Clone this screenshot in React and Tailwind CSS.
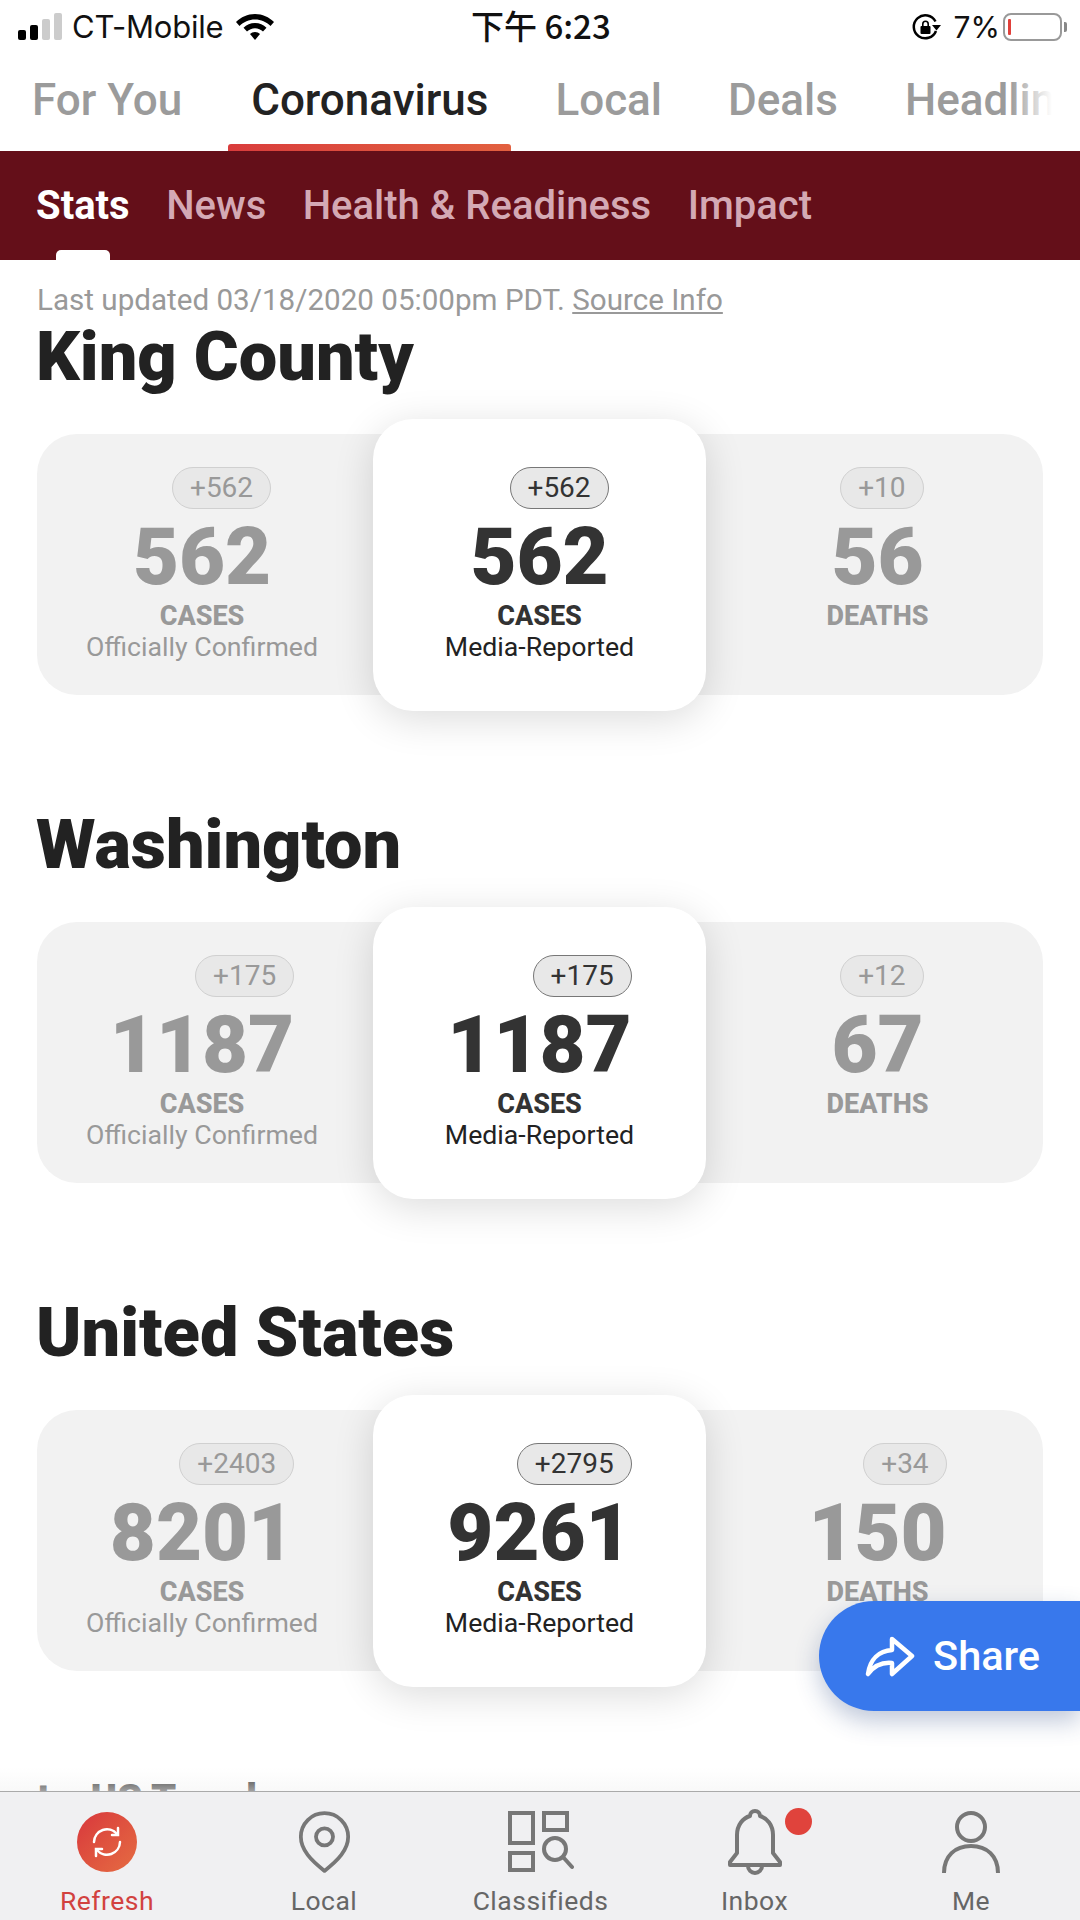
import React from 'react';

const sections = [
  {
    title: 'King County',
    confirmed: { delta: '+562', value: '562' },
    reported: { delta: '+562', value: '562' },
    deaths: { delta: '+10', value: '56' },
  },
  {
    title: 'Washington',
    confirmed: { delta: '+175', value: '1187' },
    reported: { delta: '+175', value: '1187' },
    deaths: { delta: '+12', value: '67' },
  },
  {
    title: 'United States',
    confirmed: { delta: '+2403', value: '8201' },
    reported: { delta: '+2795', value: '9261' },
    deaths: { delta: '+34', value: '150' },
  },
];

const Stat = ({ stat, label, sub, active }) => (
  <div className={`flex flex-col items-center ${active ? 'text-[#333]' : 'text-[#999]'}`}>
    <div className="inline-flex flex-col items-end">
      <span
        className={`h-[42px] px-[17px] flex items-center rounded-full border text-[28px] bg-[#e8e8e8] ${
          active ? 'border-[#777]' : 'border-[#d0d0d0]'
        }`}
      >
        {stat.delta}
      </span>
      <span className="h-[90px] leading-[96px] text-[79.500px] font-black">{stat.value}</span>
    </div>
    <span className="mt-[2px] leading-[30px] text-[27px] font-extrabold">{label}</span>
    {sub && <span className={`leading-[32px] text-[26.700px] ${active ? 'text-[#222]' : ''}`}>{sub}</span>}
  </div>
);

const Section = ({ data }) => (
  <section className="mb-[109px]">
    <h2 className="h-[84px] leading-[82px] -ml-[1px] text-[68.500px] font-black text-[#222]">{data.title}</h2>
    <div className="mt-[34px] h-[261px] flex rounded-[40px] bg-[#f2f2f2]">
      <div className="w-[330px] pt-[33px]">
        <Stat stat={data.confirmed} label="CASES" sub="Officially Confirmed" />
      </div>
      <div className="z-10 ml-[6px] w-[333px] h-[292px] -mt-[15px] pt-[48px] rounded-[40px] bg-white shadow-[0_8px_40px_rgba(0,0,0,0.14)]">
        <Stat stat={data.reported} label="CASES" sub="Media-Reported" active />
      </div>
      <div className="ml-[6px] w-[331px] pt-[33px]">
        <Stat stat={data.deaths} label="DEATHS" />
      </div>
    </div>
  </section>
);

const Wifi = () => (
  <svg width="40" height="30" viewBox="0 0 40 30" fill="#000">
    <path d="M20 2C12.500 2 6 5 1 10l3.500 4C8.500 10 14 7.500 20 7.500S31.500 10 35.500 14L39 10C34 5 27.500 2 20 2z" />
    <path d="M20 11c-4.500 0-8.500 1.800-11.500 4.800l3.500 3.700c2-2 5-3.300 8-3.300s6 1.300 8 3.300l3.500-3.700C28.500 12.800 24.500 11 20 11z" />
    <path d="M20 20c-2 0-3.700.8-5 2l5 6 5-6c-1.300-1.200-3-2-5-2z" />
  </svg>
);

const RotationLock = () => (
  <svg width="30" height="28" viewBox="0 0 30 28" fill="none">
    <path d="M24 18a11.500 11.500 0 1 1-.5-9.500" stroke="#000" strokeWidth="2.500" />
    <path d="M20 12h9l-4.500 5.500z" fill="#000" />
    <rect x="8.500" y="13" width="10" height="8" rx="1" fill="#000" />
    <path d="M10.800 13v-2a2.700 2.700 0 0 1 5.400 0v2" stroke="#000" strokeWidth="1.600" />
  </svg>
);

const StatusBar = () => (
  <div className="h-[54px] pl-[18px] pr-[13px] flex items-center relative font-['Inter',sans-serif] text-[#111]">
    <div className="flex items-end gap-[4px] h-[28px] mb-[2px]">
      <span className="w-[8px] h-[10px] rounded-[2px] bg-black" />
      <span className="w-[8px] h-[15px] rounded-[2px] bg-black" />
      <span className="w-[8px] h-[21px] rounded-[2px] bg-[#ccc]" />
      <span className="w-[8px] h-[27px] rounded-[2px] bg-[#ccc]" />
    </div>
    <span className="ml-[10px] text-[31px] tracking-[-0.2px]">CT-Mobile</span>
    <span className="ml-[11px]"><Wifi /></span>
    <span className="absolute left-[471px] top-[1px] text-[33px] font-medium font-['Noto_Sans_CJK_TC','Inter',sans-serif]">下午 6:23</span>
    <div className="ml-auto flex items-center">
      <RotationLock />
      <span className="ml-[12px] text-[30px]">7%</span>
      <div className="ml-[3px] w-[59px] h-[28px] rounded-[8px] border-[2px] border-[#999] flex items-center pl-[3px]">
        <span className="w-[3px] h-[16px] rounded-[1px] bg-[#e0403a]" />
      </div>
      <span className="ml-[2px] w-[3px] h-[10px] rounded-r-[2px] bg-[#888]" />
    </div>
  </div>
);

const TopTabs = () => (
  <div className="relative h-[97px] overflow-hidden flex pl-[32px] text-[44px] leading-[92px] font-medium whitespace-nowrap text-[#9b9b9b]">
    <span>For You</span>
    <span className="relative ml-[46px] px-[23px] text-[#222]">
      Coronavirus
      <span className="absolute left-0 right-0 bottom-0 h-[7px] rounded-t-[3px] bg-gradient-to-r from-[#d93c3c] to-[#e2603f]" />
    </span>
    <span className="ml-[44px]">Local</span>
    <span className="ml-[66px]">Deals</span>
    <span className="ml-[67px]">Headlines</span>
    <div className="absolute right-0 top-0 bottom-0 w-[70px] bg-gradient-to-r from-transparent to-white to-60%" />
  </div>
);

const subTabs = ['News', 'Health & Readiness', 'Impact'];

const SubTabs = () => (
  <div className="h-[109px] flex gap-[36.500px] pl-[36px] bg-[#640f19] text-[40px] leading-[110px] font-medium text-[#d4a9b4]">
    <span className="relative font-bold text-white">
      Stats
      <span className="absolute left-[20px] right-[20px] bottom-0 h-[10px] rounded-t-[5px] bg-white" />
    </span>
    {subTabs.map((t) => <span key={t}>{t}</span>)}
  </div>
);

const RefreshIcon = () => (
  <div className="w-[60px] h-[60px] rounded-full bg-gradient-to-br from-[#d8363c] to-[#e56b42] flex items-center justify-center">
    <svg width="34" height="34" viewBox="0 0 34 34" fill="none" stroke="#fff" strokeWidth="2.500" strokeLinecap="round">
      <path d="M4 17a13 13 0 0 1 23-8" />
      <path d="M30 17a13 13 0 0 1-23 8" />
      <path d="M28 3v7h-6" />
      <path d="M6 31v-7h6" />
    </svg>
  </div>
);

const PinIcon = () => (
  <svg width="53" height="63" viewBox="0 0 56 66" fill="none" stroke="#777" strokeWidth="4">
    <path d="M28 63C14 52 3 41 3 27a25 25 0 0 1 50 0c0 14-11 25-25 36z" strokeLinejoin="round" />
    <circle cx="28" cy="27" r="9" />
  </svg>
);

const ClassifiedsIcon = () => (
  <svg width="66" height="62" viewBox="0 0 66 62" fill="none" stroke="#777" strokeWidth="4">
    <rect x="2" y="2" width="23" height="30" />
    <rect x="2" y="42" width="23" height="17" />
    <rect x="36" y="2" width="23" height="17" />
    <circle cx="47" cy="38" r="11" />
    <path d="M55 46l9 10" strokeLinecap="round" />
  </svg>
);

const BellIcon = () => (
  <svg width="56" height="66" viewBox="0 0 56 66" fill="none" stroke="#777" strokeWidth="4" strokeLinejoin="round">
    <path d="M3 56h50v-3l-7-9V26C46 16 40 9 33 7c0-3-2-5-5-5s-5 2-5 5C16 9 10 16 10 26v18l-7 9z" />
    <path d="M21 57a7 7 0 0 0 14 0" />
  </svg>
);

const PersonIcon = () => (
  <svg width="58" height="64" viewBox="0 0 58 64" fill="none" stroke="#777" strokeWidth="4">
    <circle cx="29" cy="17" r="14" />
    <path d="M2 63C2 46 13 36 29 36s27 10 27 27" />
  </svg>
);

const navItems = [
  { label: 'Refresh', icon: RefreshIcon, width: 'w-[214px]', color: 'text-[#d2423f]' },
  { label: 'Local', icon: PinIcon, width: 'w-[220px]', color: 'text-[#666]' },
  { label: 'Classifieds', icon: ClassifiedsIcon, width: 'w-[213px]', color: 'text-[#666]' },
  { label: 'Inbox', icon: BellIcon, width: 'w-[215px]', color: 'text-[#666]', dot: true },
  { label: 'Me', icon: PersonIcon, width: 'w-[218px]', color: 'text-[#666]' },
];

const BottomNav = () => (
  <nav className="h-[129px] flex border-t border-[#aaa] bg-[#f0f0f2]">
    {navItems.map((item) => (
      <div key={item.label} className={`${item.width} flex flex-col items-center pt-[17px]`}>
        <div className="relative h-[66px] flex items-center">
          <item.icon />
          {item.dot && <span className="absolute -right-[29px] -top-[1px] w-[27px] h-[27px] rounded-full bg-[#e0433c]" />}
        </div>
        <span className={`mt-[11px] text-[26.500px] leading-[30px] tracking-[0.5px] ${item.color}`}>{item.label}</span>
      </div>
    ))}
  </nav>
);

export default function App() {
  return (
    <div className="relative w-[1080px] h-[1920px] flex flex-col overflow-hidden bg-white font-['Roboto',sans-serif]">
      <StatusBar />
      <TopTabs />
      <SubTabs />
      <main className="flex-1 overflow-hidden px-[37px] pt-[24px] relative">
        <p className="leading-[32px] text-[29.600px] text-[#999] whitespace-nowrap">
          Last updated 03/18/2020 05:00pm PDT. <span className="underline">Source Info</span>
        </p>
        {sections.map((s) => <Section key={s.title} data={s} />)}
        <h2 className="-mt-[10px] text-[40px] leading-[60px] font-black text-[#222]">
          <span className="mr-[8px]">to</span> US Trend
        </h2>
        <div className="absolute left-0 right-0 bottom-0 h-[24px] bg-gradient-to-b from-transparent to-[#f4f4f4]/60" />
      </main>
      <BottomNav />
      <button className="absolute right-0 top-[1601px] w-[261px] h-[110px] rounded-l-[55px] bg-[#3878ec] shadow-[0_10px_24px_rgba(40,70,130,0.3)] flex items-center pl-[46px] gap-[18px] text-white text-[41.500px] font-medium">
        <svg width="50" height="42" viewBox="0 0 50 42" fill="none" stroke="#fff" strokeWidth="4.500" strokeLinejoin="round" strokeLinecap="round">
          <path d="M3 39C5 24 14 16 27 15V4l20 17-20 18V28c-10-1-18 3-24 11z" />
        </svg>
        Share
      </button>
    </div>
  );
}
